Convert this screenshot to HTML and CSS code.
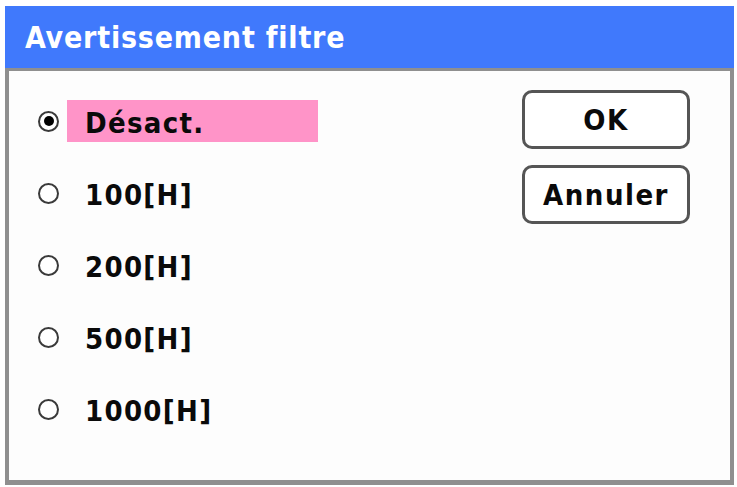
FILE: index.html
```html
<!DOCTYPE html>
<html>
<head>
<meta charset="utf-8">
<link rel="stylesheet" href="styles.css">
</head>
<body>
<div class="dialog">
  <div class="titlebar">Avertissement filtre</div>
  <div class="content">
    <div class="options">
      <div class="row">
        <span class="radio checked"></span>
        <span class="label selected">Désact.</span>
      </div>
      <div class="row">
        <span class="radio"></span>
        <span class="label">100[H]</span>
      </div>
      <div class="row">
        <span class="radio"></span>
        <span class="label">200[H]</span>
      </div>
      <div class="row">
        <span class="radio"></span>
        <span class="label">500[H]</span>
      </div>
      <div class="row">
        <span class="radio"></span>
        <span class="label">1000[H]</span>
      </div>
    </div>
    <div class="buttons">
      <div class="btn">OK</div>
      <div class="btn">Annuler</div>
    </div>
  </div>
</div>
</body>
</html>
```
FILE: styles.css
```css
html, body {
  margin: 0;
  padding: 0;
  background: #ffffff;
}
body {
  font-family: "DejaVu Sans Condensed", "DejaVu Sans", Verdana, sans-serif;
  font-stretch: condensed;
  font-weight: bold;
}
.dialog {
  margin: 6px 0 0 5px;
  width: 729px;
}
.titlebar {
  height: 62px;
  box-sizing: border-box;
  background: #4079fc;
  color: #ffffff;
  font-size: 30px;
  letter-spacing: 0.8px;
  line-height: 64px;
  padding-left: 20px;
}
.content {
  height: 417px;
  box-sizing: border-box;
  background: #fdfdfd;
  border-top: 3px solid #8f8f8f;
  border-left: 4px solid #8f8f8f;
  border-right: 4px solid #8f8f8f;
  border-bottom: 5px solid #8f8f8f;
  display: flex;
  justify-content: space-between;
  padding: 14px 40px 0 29px;
}
.options {
  display: flex;
  flex-direction: column;
}
.row {
  height: 72px;
  display: flex;
  align-items: center;
}
.radio {
  width: 21px;
  height: 21px;
  box-sizing: border-box;
  border: 2px solid #3a3a3a;
  border-radius: 50%;
  background: #ffffff;
  display: flex;
  align-items: center;
  justify-content: center;
}
.radio.checked::after {
  content: "";
  width: 10px;
  height: 10px;
  border-radius: 50%;
  background: #000000;
}
.label {
  margin-left: 8px;
  width: 251px;
  height: 42px;
  box-sizing: border-box;
  padding-left: 18px;
  font-size: 29px;
  letter-spacing: 1.3px;
  line-height: 46px;
  color: #0a0a0a;
}
.label.selected {
  background: #ff94c8;
}
.buttons {
  display: flex;
  flex-direction: column;
  gap: 16px;
  margin-top: 5px;
}
.btn {
  width: 168px;
  height: 59px;
  box-sizing: border-box;
  border: 3px solid #555555;
  border-radius: 10px;
  background: #ffffff;
  font-size: 29px;
  letter-spacing: 1.5px;
  color: #0a0a0a;
  text-align: center;
  line-height: 55px;
}
```
